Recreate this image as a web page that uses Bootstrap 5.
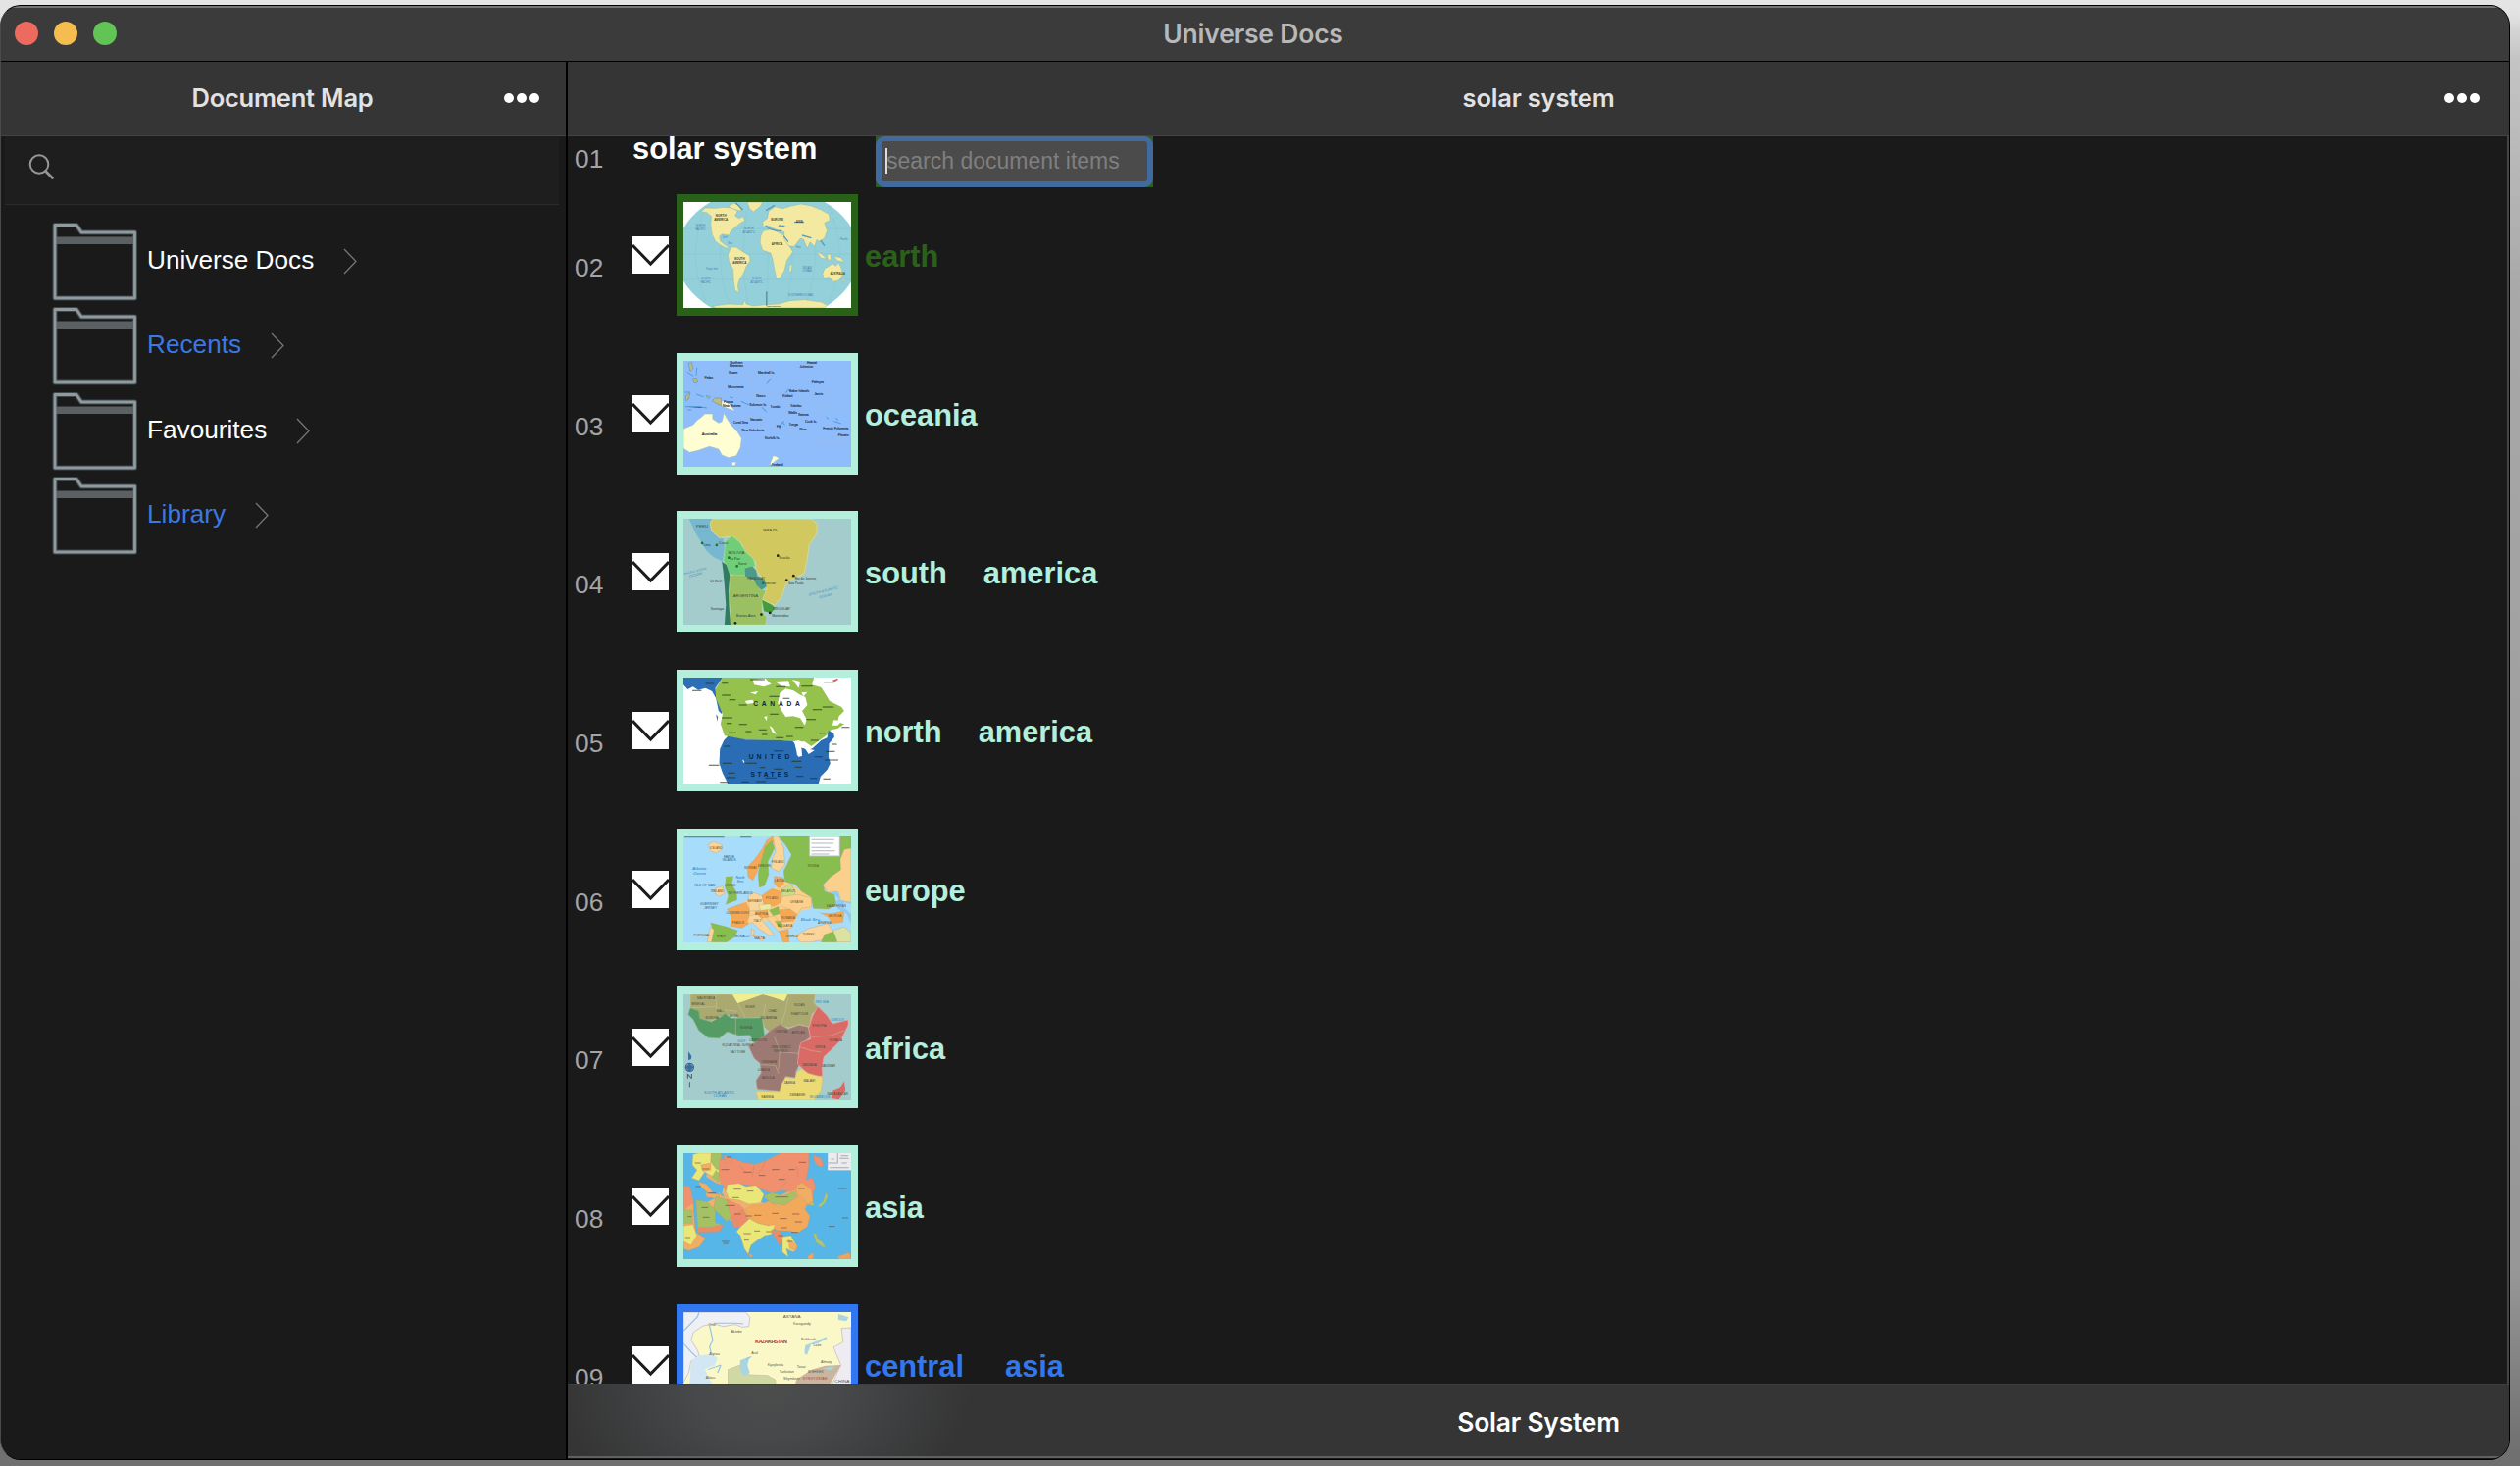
<!DOCTYPE html>
<html lang="en" data-bs-theme="dark">
<head>
<meta charset="utf-8">
<meta name="viewport" content="width=device-width, initial-scale=1">
<title>Universe Docs</title>
<link href="https://cdn.jsdelivr.net/npm/bootstrap@5.3.0/dist/css/bootstrap.min.css" rel="stylesheet">
<style>
html,body{height:100%}
body{margin:0;overflow:hidden;font-family:"Liberation Sans",Arial,sans-serif;background:linear-gradient(180deg,#e6e6e6 0,#c4c4c4 60px,#a8a8a8 300px,#969696 1300px,#707070 1480px)}
.desk{height:1495px;padding:5px 10px 6px 0;background:linear-gradient(180deg,#e4e4e4 0,#e4e4e4 5px,transparent 30px)}
.app-window{width:2560px;height:1484px;background:#1a1a1a;border:1px solid #000;border-left-color:#4a4a4a;border-radius:21px;overflow:hidden}
.titlebar{height:57px;background:#3b3b3b;border-top:2px solid #757575;border-bottom:1px solid #000;padding-bottom:3px}
.ui-font{font-family:Inter,Roboto,sans-serif;font-weight:600;letter-spacing:-.2px;line-height:30px;color:#e2e2e2}
.lights{width:200px;padding-left:14px;gap:16px}
.light{width:24px;height:24px;border-radius:50%}
.light-close{background:#ed6a5f}
.light-min{background:#f5bd4f}
.light-max{background:#61c455}
.win-title{color:#b8b8b8;font-size:26.5px}
.panel-head{height:76px;background:#353535;border-bottom:1px solid #444;padding-bottom:1px}
.panel-title{font-size:25.5px}
.dots{width:38px;height:12px}
.sidebar{width:576px;background:#1a1a1a}
.pane-line{width:2px;background:#000}
.find{height:70px;margin:0 7px 0 4px;background:#1e1e1e;border-bottom:1px solid #2b2b2b;padding:17px 0 0 24px}
.tree{padding:17px 0 0 52px}
.node{height:86.3px;font-size:26.2px;line-height:30px}
.node-label{padding:24px 0 0 9px}
.node-arrow{margin:27px 0 0 24px}
.blue{color:#3b78e4}
.main-pane{box-shadow:inset -2px 0 0 #444}
.items{height:1272px}
.doc-row{height:161.7px;padding-left:7px}
.doc-row.first{height:59px}
.num{width:59px;font-size:26.3px;line-height:26px;color:#a4a4a4;padding-top:62px}
.first .num{padding-top:10px}
.envelope{width:37px;height:38px;margin-top:43px;margin-right:8px;background:#fff}
.frame{width:185px;height:124px;border:8px solid currentColor;border-left-width:7px;border-right-width:7px}
.frame svg{width:171px;height:108px;display:block}
.name{padding:48px 0 0 7px;font-size:30.8px;line-height:31px;font-weight:700;white-space:nowrap}
.word-gap{margin-left:37px}
.heading{width:248px;margin-top:-3px;font-size:30.8px;line-height:31px;font-weight:700;color:#fff}
.mint{color:#b3efdc}
.green{color:#2a6119}
.azure{color:#3178f0}
.searchwrap{width:283px;height:52px;background:#2a6119}
.searchbox{height:52px;border:6px solid #416a9f;border-top-width:5px;border-radius:9px;background:#4b4b4b;color:#7f7f7f;font-size:23px;line-height:27px;padding:7px 0 0 4px}
.caret{width:2px;height:26px;background:#ddd;margin-right:-1px}
.footbar{height:76px;padding-top:3px;color:#fff;font-size:26.4px;background:radial-gradient(ellipse 210px 150px at 202px 0,#4c4d4d 0,#47494a 35%,#3d3e3f 70%,#353535 100%) #353535;border-top:1px solid #3f3f3f;border-bottom:2px solid #606260}
svg text{font-family:"Liberation Sans",Arial,sans-serif}
</style>
<script src="https://cdn.jsdelivr.net/npm/bootstrap@5.3.0/dist/js/bootstrap.bundle.min.js"></script>
</head>
<body>
<svg width="0" height="0" class="position-absolute">
<defs>
<g id="folder"><path d="M3 78V3.500H25L30 11H84.500V78Z" fill="none" stroke="#59666a" stroke-width="5" stroke-linejoin="round" opacity=".6"/><rect x="4" y="15.500" width="80" height="7.500" fill="#5b6062"/><path d="M3 78V3.500H25L30 11H84.500V78Z" fill="none" stroke="#8e9a9d" stroke-width="2.800" stroke-linejoin="round"/></g>
<path id="chev" d="M1 1L13 13.500L1 26" fill="none" stroke="#757575" stroke-width="1.300"/>
<g id="mail"><path d="M0 9L18.500 28L37 9" fill="none" stroke="#1c1c1c" stroke-width="3"/></g>
</defs>
</svg>
<div class="desk">
<div class="app-window d-flex flex-column">
  <header class="titlebar d-flex align-items-center flex-shrink-0">
    <div class="lights d-flex"><span class="light light-close"></span><span class="light light-min"></span><span class="light light-max"></span></div>
    <div class="win-title flex-grow-1 text-center ui-font">Universe Docs</div>
    <div style="width:204px"></div>
  </header>
  <div class="d-flex flex-grow-1">
    <aside class="sidebar d-flex flex-column flex-shrink-0">
      <div class="panel-head d-flex align-items-center">
        <div style="width:62px"></div>
        <div class="panel-title ui-font flex-grow-1 text-center">Document Map</div>
        <svg class="dots" style="margin-right:26px" viewBox="0 0 38 12" fill="#fff"><circle cx="6" cy="6" r="5"/><circle cx="19" cy="6" r="5"/><circle cx="32" cy="6" r="5"/></svg>
      </div>
      <div class="find"><svg width="27" height="28" viewBox="0 0 27 28" fill="none" stroke="#969696" stroke-width="2"><circle cx="11" cy="11.500" r="9.300"/><path d="M17.500 18.500L24.500 25.500" stroke-width="2.700" stroke-linecap="round"/></svg></div>
      <nav class="tree">
        <div class="node d-flex"><svg width="88" height="82"><use href="#folder"/></svg><span class="node-label text-white">Universe Docs</span><svg class="node-arrow" width="24" height="28"><use href="#chev" x="6"/></svg></div>
        <div class="node d-flex"><svg width="88" height="82"><use href="#folder"/></svg><span class="node-label blue">Recents</span><svg class="node-arrow" width="24" height="28"><use href="#chev" x="6"/></svg></div>
        <div class="node d-flex"><svg width="88" height="82"><use href="#folder"/></svg><span class="node-label text-white">Favourites</span><svg class="node-arrow" width="24" height="28"><use href="#chev" x="6"/></svg></div>
        <div class="node d-flex"><svg width="88" height="82"><use href="#folder"/></svg><span class="node-label blue">Library</span><svg class="node-arrow" width="24" height="28"><use href="#chev" x="6"/></svg></div>
      </nav>
    </aside>
    <div class="pane-line"></div>
    <main class="main-pane flex-grow-1 d-flex flex-column">
      <div class="panel-head d-flex align-items-center flex-shrink-0">
        <div style="width:67px"></div>
        <div class="panel-title ui-font flex-grow-1 text-center">solar system</div>
        <svg class="dots" style="margin-right:29px" viewBox="0 0 38 12" fill="#fff"><circle cx="6" cy="6" r="5"/><circle cx="19" cy="6" r="5"/><circle cx="32" cy="6" r="5"/></svg>
      </div>
      <section class="items overflow-hidden flex-shrink-0">
        <div class="doc-row first d-flex align-items-start"><div class="num">01</div><div class="heading">solar system</div><div class="searchwrap"><div class="searchbox d-flex"><span class="caret"></span><span>search document items</span></div></div></div>

        <div class="doc-row d-flex align-items-start"><div class="num">02</div><svg class="envelope"><use href="#mail"/></svg>
          <div class="frame green"><svg viewBox="51 48 510 324" preserveAspectRatio="none">
            <rect x="51" y="48" width="510" height="324" fill="#fff"/><ellipse cx="307" cy="209" rx="278" ry="206" fill="#94d0da"/>
            <g stroke="#7dbfcc" stroke-width="1" fill="none"><path d="M51 130H561M51 207H561M51 285H561M307 48V372M250 48Q215 210 250 372M364 48Q400 210 364 372M195 48Q130 210 195 372M419 48Q485 210 419 372M120 60Q55 210 120 355M492 60Q560 210 492 355"/></g>
            <g fill="#f4e9a0" stroke="#8fb9a4" stroke-width="1.500">
              <path d="M104 78L118 66 150 67 172 64 200 66 216 76 208 90 220 98 232 92 238 104 222 114 205 128 195 138 190 150 178 148 168 146 160 155 164 168 176 178 188 186 182 190 164 180 148 168 138 146 134 118 136 92 122 80Z"/>
              <path d="M188 60L204 52 222 58 226 76 212 72 196 66ZM245 48H292L284 62 264 78 252 68Z"/>
              <path d="M196 186L212 186 232 200 252 212 254 228 242 246 234 266 222 284 216 304 220 326 208 318 204 290 202 254 190 232 186 210Z"/>
              <path d="M294 136L320 131 350 146 368 158 374 184 384 200 366 226 358 258 346 280 334 282 328 256 322 222 316 204 292 196 284 172 286 152Z"/>
              <path d="M294 126L292 108 306 98 310 76 330 62 352 68 380 60 408 54 440 60 470 72 494 86 496 104 480 112 488 136 480 158 466 168 456 164 450 184 436 170 428 190 416 162 406 160 388 184 370 182 356 158 358 140 340 136 324 128 308 120Z"/>
              <path d="M474 268L480 252 494 244 504 236 514 244 524 234 532 252 536 270 524 288 508 292 494 278 478 280Z"/>
              <path d="M374 244L382 236 380 258 372 264ZM456 200L472 208 486 222 470 220ZM488 210L498 206 500 226 490 224ZM508 214L530 218 540 232 520 228ZM536 286L544 280 536 296Z"/>
              <path d="M140 366L190 360 232 362 238 348 242 360 262 366 300 362 340 360 374 350 420 347 470 354 488 364 480 372H150Z"/>
            </g>
            <path d="M300 120Q320 138 350 136M340 120L360 122M356 152L370 170M412 150L440 158M388 110H418M468 165L480 182M232 72L210 50M302 74L328 58" stroke="#5b9bb8" stroke-width="4" fill="none"/>
            <path d="M304 322V366" stroke="#345" stroke-width="2"/>
            <g font-size="9" font-weight="700" fill="#45452e" text-anchor="middle"><text x="165" y="94">NORTH</text><text x="165" y="105">AMERICA</text><text x="222" y="226">SOUTH</text><text x="222" y="237">AMERICA</text><text x="336" y="180">AFRICA</text><text x="336" y="104">EUROPE</text><text x="404" y="110">ASIA</text><text x="520" y="270" font-size="8">AUSTRALIA</text><text x="326" y="369" font-size="7">ANTARCTICA</text></g>
            <g font-size="8" fill="#3f7fae" text-anchor="middle"><text x="103" y="124">NORTH</text><text x="103" y="134">PACIFIC</text><text x="250" y="132">NORTH</text><text x="250" y="143">ATLANTIC</text><text x="119" y="286">SOUTH</text><text x="119" y="297">PACIFIC</text><text x="274" y="286">SOUTH</text><text x="274" y="297">ATLANTIC</text><text x="427" y="252">INDIAN</text><text x="427" y="262">OCEAN</text><text x="408" y="336">SOUTHERN OCEAN</text><text x="137" y="256">Tropic line</text><text x="540" y="165">Pacific</text><text x="400" y="190">Sea</text><text x="177" y="158">Gulf</text><text x="193" y="178">Sea</text></g>
          </svg></div><div class="name green">earth</div></div>

        <div class="doc-row d-flex align-items-start"><div class="num">03</div><svg class="envelope"><use href="#mail"/></svg>
          <div class="frame mint"><svg viewBox="51 54 510 324" preserveAspectRatio="none">
            <rect x="51" y="54" width="510" height="324" fill="#8fbdfb"/>
            <path d="M170 54V76H345V136H252V96H145V156H270V180M115 100V138H145M442 136H482L512 178V208H460V190L560 190M375 184H465V302H561M375 184V250L360 270H440M220 230H295V270M270 152H340" fill="none" stroke="#a2b9dc" stroke-width="1.500"/>
            <path d="M51 262L80 250 92 236 106 226 116 216 140 216 140 232 158 244 168 240 174 214 184 232 196 250 216 272 228 292 224 320 212 344 188 350 168 342 158 324 130 316 96 328 70 334 51 322ZM198 364L212 363 208 374 200 374ZM324 344L332 346 342 352 328 362 318 372 314 370Z" fill="#fffdd2" stroke="#96b9be" stroke-width="1.500"/>
            <path d="M146 168L166 168 168 192 150 184 138 176ZM66 62L76 58 80 78 72 86ZM78 108L92 106 94 120 84 122ZM58 160L72 152 66 172 58 176ZM120 160L134 164 126 170Z" fill="#c4b77f" stroke="#579cba" stroke-width="2"/><path d="M168 176L188 184 206 206 190 200 168 192Z" fill="#fff7c9"/>
            <path d="M62 88L82 100M92 74L90 98M54 150H72M90 156L112 164M56 194H100L122 198M64 204H76M192 164L202 168M226 178L250 188M290 196L304 210M340 255L358 238M350 240L360 250M485 225L492 232M508 238L530 246M514 228L522 236M362 152L372 140M318 108L304 124" stroke="#559de0" stroke-width="3"/>
            <g font-size="10" fill="#21314d" stroke="#21314d" stroke-width=".4" text-anchor="middle"><text x="212" y="63">Northern</text><text x="212" y="72">Marianas</text><text x="202" y="92">Guam</text><text x="128" y="109">Palau</text><text x="303" y="94">Marshall Is.</text><text x="210" y="139">Micronesia</text><text x="286" y="165">Nauru</text><text x="368" y="165">Kiribati</text><text x="403" y="151">Baker Islands</text><text x="459" y="122">Palmyra</text><text x="462" y="158">Jarvis</text><text x="188" y="184">Papua</text><text x="198" y="195">New Guinea</text><text x="278" y="191">Solomon Is.</text><text x="330" y="198">Tuvalu</text><text x="393" y="196">Tokelau</text><text x="384" y="216">Wallis</text><text x="416" y="222">Samoa</text><text x="272" y="236">Vanuatu</text><text x="225" y="247">Coral Sea</text><text x="262" y="269">New Caledonia</text><text x="341" y="258">Fiji</text><text x="386" y="252">Tonga</text><text x="415" y="268">Niue</text><text x="439" y="243">Cook Is.</text><text x="514" y="264">French Polynesia</text><text x="321" y="293">Norfolk Is.</text><text x="538" y="285">Pitcairn</text><text x="425" y="75">Johnston</text><text x="442" y="63">Hawaii</text><text x="130" y="282" font-size="12">Australia</text><text x="336" y="375">Zealand</text></g>
          </svg></div><div class="name mint">oceania</div></div>

        <div class="doc-row d-flex align-items-start"><div class="num">04</div><svg class="envelope"><use href="#mail"/></svg>
          <div class="frame mint"><svg viewBox="51 60 510 321" preserveAspectRatio="none">
            <rect x="51" y="60" width="510" height="321" fill="#a5cccd"/>
            <path d="M68 60H140L134 90 146 108 172 120 178 150 170 190 142 176 120 156 104 130 88 104Z" fill="#77b8d0"/>
            <path d="M140 60H440L458 76 456 106 434 138 426 190 418 226 380 244 362 260 348 300 328 322 290 304 304 274 290 240 272 216 270 190 244 166 224 130 196 114 160 118 136 96 132 72Z" fill="#d1c95f" stroke="#dfe0a0" stroke-width="2"/>
            <path d="M178 128L198 112 222 130 242 162 264 182 270 204 240 210 238 232 206 234 190 226 182 200 172 188 176 160Z" fill="#6fce77" stroke="#b2dfa2" stroke-width="2"/>
            <path d="M190 234L206 230 236 232 270 250 284 274 302 278 290 306 290 340 304 360 300 381H190L194 340 188 290 192 260Z" fill="#9bc062" stroke="#bcd79c" stroke-width="1.500"/>
            <path d="M168 190L182 200 192 230 188 280 190 330 194 381H176L180 320 176 262 172 220Z" fill="#2f7c60"/>
            <path d="M238 210L260 204 272 216 276 234 298 244 304 266 288 276 274 262 266 246 238 234Z" fill="#4c9b88"/><path d="M290 306L318 320 330 330 318 346 296 340Z" fill="#459c38"/>
            <g fill="#173"><circle cx="108" cy="134" r="4"/><circle cx="152" cy="140" r="4"/><circle cx="189" cy="178" r="4"/><circle cx="214" cy="204" r="4"/></g><g fill="#222"><circle cx="338" cy="172" r="4"/><circle cx="386" cy="233" r="4"/><circle cx="365" cy="246" r="4"/><circle cx="288" cy="350" r="4"/><circle cx="314" cy="345" r="4"/><circle cx="209" cy="376" r="4"/></g>
            <g font-size="13" fill="#3d4a31" text-anchor="middle"><text x="108" y="87">PERU</text><text x="316" y="98">BRAZIL</text><text x="212" y="166">BOLIVIA</text><text x="240" y="299">ARGENTINA</text><text x="150" y="253">CHILE</text><text x="350" y="335" font-size="11">URUGUAY</text><text x="272" y="243" font-size="10">PARAGUAY</text></g>
            <g font-size="10" fill="#263b38"><text x="112" y="144">Lima</text><text x="158" y="137">Cusco</text><text x="192" y="186">La Paz</text><text x="218" y="200">Sucre</text><text x="342" y="182">Brasilia</text><text x="390" y="243">Rio de Janeiro</text><text x="370" y="258">Sao Paulo</text><text x="134" y="336">Santiago</text><text x="212" y="358">Buenos Aires</text><text x="320" y="356">Montevideo</text><text x="290" y="260">Asuncion</text></g>
            <g font-size="11" font-style="italic" fill="#398dba"><text x="54" y="230" transform="rotate(-14 54 230)" font-size="9">PACIFIC OCEAN</text><text x="70" y="238" transform="rotate(-14 70 238)">OCEAN</text><text x="432" y="294" transform="rotate(-14 432 294)">SOUTH ATLANTIC</text><text x="464" y="302" transform="rotate(-14 464 302)">OCEAN</text></g>
          </svg></div><div class="name mint">south<span class="word-gap">america</span></div></div>

        <div class="doc-row d-flex align-items-start"><div class="num">05</div><svg class="envelope"><use href="#mail"/></svg>
          <div class="frame mint"><svg viewBox="51 48 510 324" preserveAspectRatio="none">
            <rect x="51" y="48" width="510" height="324" fill="#fff"/>
            <path d="M51 48H170L148 80 152 112 166 134 168 160 158 150 150 112 138 90 118 80 96 86 80 76 64 84 51 70ZM150 160L156 168 154 182Z" fill="#2d6fb6"/>
            <path d="M170 48H448L442 70 470 78 496 120 532 138 540 150 524 166 520 184 540 190 520 204 500 208 490 222 470 236 440 258 420 244 376 244 350 240 220 238 188 228 176 226 164 190 170 160 150 112 148 84Z" fill="#94c24c"/>
            <path d="M186 227L240 238 350 240 388 244 392 262 400 290 412 288 410 262 430 270 444 264 470 240 488 232 492 210 508 218 510 230 494 250 492 290 498 310 488 330 468 350 462 372H186L170 340 160 310 162 266 174 240Z" fill="#2b6db5"/>
            <path d="M344 96L362 82 386 88 404 100 422 108 428 132 412 150 426 176 420 194 406 172 384 166 362 168 350 150 338 126ZM262 54L300 50 318 68 296 76 266 70ZM330 60L370 58 376 76 350 74ZM382 54L406 60 402 80ZM254 94L278 90 270 100ZM238 120L260 116 268 126 244 128ZM312 194L322 202 334 222 322 216ZM296 168L306 166 304 180ZM384 244L402 240 420 250 432 262 416 264 396 256ZM508 178L534 180 520 194 504 194ZM420 264L450 270 432 282ZM396 258L404 260 404 290 396 284ZM230 298L237 304 234 310ZM410 94L428 92 416 106Z" fill="#fff"/>
            <path d="M504 56L520 50 522 54 510 62Z" fill="#e66070"/>
            <path d="M168 65H186M118 66H144M78 88H106M168 102H194M190 116H210M220 132H244M168 171H200M182 188H198M220 191H244M188 217H212M240 213H258M280 208H304M290 222H306M332 232H356M364 228H384M390 200H416M424 176H454M444 146H472M474 138H508M478 62H510M332 76H362M410 74H444M312 106H342M254 54H298M438 240H462M314 160H340M174 258H192M170 310H200M186 340H208M182 354H210M228 367H250M240 310H274M284 323H300M326 328H354M390 322H412M394 350H416M436 356H458M326 272H356M450 290H474M480 300H522M484 274H512M476 358H498M128 316H160M300 355H334M380 304H410M464 218H482M532 200H556M162 368H188M502 252H518M354 112H374M272 366H302" stroke="#24331f" stroke-opacity=".8" stroke-width="3"/>
            <g font-weight="700" fill="#12243a" text-anchor="middle"><text x="340" y="136" font-size="20" letter-spacing="11">CANADA</text><text x="317" y="298" font-size="20" letter-spacing="10">UNITED</text><text x="317" y="350" font-size="20" letter-spacing="8">STATES</text></g>
          </svg></div><div class="name mint">north<span class="word-gap">america</span></div></div>

        <div class="doc-row d-flex align-items-start"><div class="num">06</div><svg class="envelope"><use href="#mail"/></svg>
          <div class="frame mint"><svg viewBox="51 54 510 324" preserveAspectRatio="none">
            <rect x="51" y="54" width="510" height="324" fill="#a7dcfb"/>
            <path d="M200 280L250 244 290 234 330 210 344 190 372 196 440 240 440 272 400 290 388 320 374 340H350L310 310 260 320 226 328Z" fill="#fbd08c"/>
            <g stroke="#b79b67" stroke-width="1">
            <path d="M126 78L144 70 168 80 168 94 150 104 132 98Z" fill="#fbd49a"/>
            <path d="M340 54H561V90L540 96 528 130 530 156 496 180 476 200 480 222 510 232 516 262 492 276 446 274 440 240 410 222 392 200 360 192 356 160 366 140 380 110 362 80Z" fill="#88bd50"/>
            <path d="M561 90L540 94 528 124 530 156 496 180 476 204 490 226 516 222 530 250 561 258Z" fill="#fbd08c"/>
            <path d="M322 54H340L356 90 360 140 340 162 318 150 322 120 332 100Z" fill="#fbd49a"/>
            <path d="M246 146L268 124 292 90 304 66 322 54 326 70 300 90 286 130 276 160 262 188 248 178Z" fill="#f6a954"/>
            <path d="M284 140L300 84 320 66 328 90 308 130 310 170 298 204 282 210 278 170Z" fill="#88bd50"/>
            <path d="M180 178L202 176 198 200 212 224 214 248 180 262 188 236 178 210Z" fill="#88bd50"/><path d="M148 212L170 206 176 228 160 238 148 230Z" fill="#fbd49a"/>
            <path d="M134 318L180 330 216 342 206 362 182 377H136L142 346Z" fill="#88bd50"/><path d="M132 330L144 340 136 377H124Z" fill="#fbd49a"/>
            <path d="M184 276L216 264 242 256 252 280 248 322 228 334 194 328 198 300Z" fill="#f6a954"/>
            <path d="M248 236L266 226 290 236 296 260 282 280 252 282Z" fill="#fbd49a"/><path d="M290 234L320 214 346 222 350 254 326 268 296 260Z" fill="#f6a954"/>
            <path d="M328 176L354 180 356 200 340 212 326 196Z" fill="#f6a954"/><path d="M350 216L376 196 392 222 386 240 352 238Z" fill="#c8dc8b"/>
            <path d="M350 238L400 232 440 242 440 270 410 274 398 292 370 276 346 266Z" fill="#fbd08c"/>
            <path d="M280 264L316 260 318 276 286 282Z" fill="#e8eaa1"/><path d="M312 280L340 268 344 290 324 296Z" fill="#88bd50"/><path d="M344 278L376 276 398 294 386 312 348 314Z" fill="#f6a954"/>
            <path d="M252 296L284 290 290 310 314 338 328 358 310 356 280 336 262 318 244 318ZM262 356L300 364 290 374ZM258 336L266 340 264 360 258 360Z" fill="#fbd49a"/>
            <path d="M268 284L306 278 310 300 288 304Z" fill="#f6a954"/><path d="M304 302L328 296 344 318 350 350 336 340 318 320Z" fill="#fbd08c"/><path d="M330 312L348 314 352 334 340 330Z" fill="#88bd50"/><path d="M350 316L386 314 382 332 360 336Z" fill="#fbd49a"/><path d="M342 344L370 338 372 377H354Z" fill="#f6a954"/>
            <path d="M392 358L430 336 490 320 506 344 490 366 440 377 406 377Z" fill="#fbd49a"/><path d="M480 354L510 344 518 377H470Z" fill="#88bd50"/><path d="M506 342L540 330 561 350V377H520Z" fill="#dde2a0"/><path d="M460 288L500 290 540 282 536 316 500 320 486 306Z" fill="#f6a954"/>
            </g>
            <path d="M500 224L522 222 528 240 514 256 520 276 548 290 561 320V292L536 268 540 256 561 260V254L530 250Z" fill="#8cccf3"/><path d="M398 302L410 280 440 276 490 300 504 320 450 322 406 326Z" fill="#a7dcfb"/>
            <rect x="434" y="54" width="92" height="60" fill="#fff" stroke="#b8bec4" stroke-width="3"/><path d="M440 64H510M440 75H508M440 88H498M440 98H512M440 108H494" stroke="#b4b8c0" stroke-width="3"/><path d="M54 56H175M224 56H258" stroke="#4c7393" stroke-width="3"/>
            <g font-size="9" fill="#664c2b" text-anchor="middle"><text x="150" y="94">ICELAND</text><text x="338" y="134">FINLAND</text><text x="256" y="154">NORWAY</text><text x="297" y="146">SWEDEN</text><text x="446" y="146">RUSSIA</text><text x="343" y="193">LATVIA</text><text x="370" y="226">BELARUS</text><text x="320" y="246">POLAND</text><text x="396" y="257">UKRAINE</text><text x="268" y="254">GERMANY</text><text x="218" y="320">FRANCE</text><text x="165" y="364">SPAIN</text><text x="107" y="360">PORTUGAL</text><text x="432" y="356">TURKEY</text><text x="370" y="306">ROMANIA</text><text x="276" y="316">ITALY</text><text x="194" y="206">UNITED</text><text x="154" y="226">IRELAND</text><text x="516" y="271">KAZAKHSTAN</text><text x="480" y="322">ARMENIA</text><text x="512" y="299">GEORGIA</text><text x="360" y="330">BULGARIA</text><text x="382" y="363">GREECE</text><text x="288" y="294">AUSTRIA</text></g>
            <g font-size="10" fill="#315c7d" text-anchor="middle"><text x="190" y="119">FAROE</text><text x="190" y="130">ISLANDS</text><text x="116" y="206">ISLE OF MAN</text><text x="130" y="264">GUERNSEY</text><text x="134" y="276">JERSEY</text><text x="224" y="230">NETHERLANDS</text><text x="216" y="290">LUXEMBOURG</text><text x="230" y="362">MONACO</text><text x="282" y="370">MALTA</text></g><g font-size="13" font-style="italic" fill="#2774c4" text-anchor="middle"><text x="100" y="157">Atlantic</text><text x="100" y="170">Ocean</text><text x="437" y="312">Black Sea</text><text x="224" y="184" font-size="11">North</text><text x="224" y="194" font-size="11">Sea</text></g>
          </svg></div><div class="name mint">europe</div></div>

        <div class="doc-row d-flex align-items-start"><div class="num">07</div><svg class="envelope"><use href="#mail"/></svg>
          <div class="frame mint"><svg viewBox="51 51 510 321" preserveAspectRatio="none">
            <rect x="51" y="51" width="510" height="321" fill="#a5cccd"/>
            <path d="M72 51H200L216 76 292 51H452L448 76 462 92 442 112 434 150 404 142 372 152 340 144 316 168 296 150 290 120 218 124 204 112 170 116 136 132 96 124 72 100Z" fill="#aaa970" stroke="#c9ca9e" stroke-width="1.500"/><path d="M200 51H292L216 78ZM292 51H368L358 72 330 62Z" fill="#f1ee90"/>
            <path d="M72 92L98 102 100 124 136 134 178 110 196 124 290 122 294 152 298 184 282 206 262 194 254 174 220 176 184 164 160 184 126 182 98 160 82 128 66 112Z" fill="#559b66" stroke="#73ae78" stroke-width="2"/>
            <path d="M250 210L284 186 322 156 344 142 370 156 402 144 430 150 438 180 408 202 400 230 404 262 392 288 396 304 362 300 344 346 276 340 272 312 288 288 284 260 266 244Z" fill="#9c7972" stroke="#b89791" stroke-width="2"/>
            <path d="M460 88L488 116 504 140 552 128 552 144 530 190 500 220 478 240 472 272 474 298 440 300 422 284 398 262 404 212 408 198 438 186 432 154 444 116Z" fill="#da6a65" stroke="#eca29c" stroke-width="2"/><path d="M540 314L544 344 524 370 500 366 506 344 526 336Z" fill="#da6a65"/>
            <path d="M272 346L344 348 350 322 362 302 390 306 396 286 410 276 430 290 474 302 470 344 448 372H278Z" fill="#ecdb75" stroke="#c9c27c" stroke-width="2"/>
            <path d="M148 51L152 96 214 102M300 80L294 120M370 60L362 100 350 140M216 78L240 122M136 132L170 116M210 124V174M328 180L344 226 340 280M344 226L400 230M440 180L500 176L540 160M404 210L440 222 470 226M286 264L330 266 340 290M360 300L392 306M72 92L148 88" stroke="#d3cda5" stroke-opacity=".65" stroke-width="2" fill="none"/>
            <path d="M66 224L76 238 74 248 66 250ZM70 260L82 272 70 286 58 272Z" fill="#3a6e9c"/><circle cx="70" cy="272" r="12" fill="none" stroke="#3c6693" stroke-width="4"/><path d="M64 292V306M76 292V306M64 292L76 306M70 316V334" stroke="#425f7d" stroke-width="3"/>
            <g font-size="9" fill="#4a4d3b" text-anchor="middle"><text x="120" y="65">MAURITANIA</text><text x="96" y="83">SENEGAL</text><text x="162" y="106">MALI</text><text x="254" y="94">NIGER</text><text x="322" y="104">CHAD</text><text x="404" y="86">SUDAN</text><text x="404" y="112">KHARTOUM</text><text x="138" y="125">BURKINA</text><text x="204" y="118">BENIN</text><text x="242" y="156">NIGERIA</text><text x="310" y="124">NDJAMENA</text><text x="278" y="195">CAMEROON</text><text x="350" y="168">CENTRAL</text><text x="400" y="170">AFRICAN</text><text x="348" y="214">DEMOCRATIC</text><text x="348" y="226">REPUBLIC</text><text x="312" y="258">KINSHASA</text><text x="308" y="308">ANGOLA</text><text x="295" y="282">LUANDA</text><text x="464" y="148">ETHIOPIA</text><text x="514" y="194">SOMALIA</text><text x="466" y="214">KENYA</text><text x="434" y="268">TANZANIA</text><text x="374" y="322">ZAMBIA</text><text x="434" y="316">MALAWI</text><text x="398" y="360">ZIMBABWE</text><text x="306" y="367">NAMIBIA</text><text x="520" y="356">MADAGASCAR</text><text x="216" y="210">EQUATORIAL GUINEA</text><text x="216" y="230">SAO TOME</text><text x="492" y="270">ZANZIBAR</text></g><g font-size="11" fill="#2984be" text-anchor="middle"><text x="160" y="354">SOUTH ATLANTIC</text><text x="162" y="364">OCEAN</text><text x="472" y="77" font-size="9">RED SEA</text><text x="520" y="130" font-size="9">DJIBOUTI</text><text x="228" y="196" font-size="9">GULF</text><text x="466" y="367" font-size="9">MOZAMBIQUE</text></g>
          </svg></div><div class="name mint">africa</div></div>

        <div class="doc-row d-flex align-items-start"><div class="num">08</div><svg class="envelope"><use href="#mail"/></svg>
          <div class="frame mint"><svg viewBox="51 48 510 324" preserveAspectRatio="none">
            <rect x="51" y="48" width="510" height="324" fill="#56b6e8"/>
            <path d="M136 52L164 60 170 140 184 176 200 190 300 200 400 150 444 170 420 220 300 276 230 280 190 250 150 224 122 198 160 180 152 140 120 120Z" fill="#f1b070"/>
            <g stroke="#c6945e" stroke-width="1">
            <path d="M80 52L96 48H136L134 74 162 90 158 132 136 116 116 106 98 132 76 124 92 100 78 84Z" fill="#e8e778"/><path d="M136 48H166L164 100 150 96 134 74ZM150 100L160 112 158 138 138 122Z" fill="#a4c166"/><path d="M104 84L134 78 134 100 110 104ZM96 136L120 142 140 166 128 172 104 150ZM118 170L160 174 158 188 122 182Z" fill="#f1ad63"/>
            <path d="M162 64L196 76 204 64 232 76 270 82 300 72 326 58 348 48H432V90L424 130 444 124 452 150 440 190 422 170 408 150 380 166 350 162 320 170 292 160 270 150 240 144 200 142 180 160 164 140 158 110Z" fill="#f0906e"/><path d="M446 54L470 64 476 86 462 88 450 74ZM174 54L200 64 202 78 176 78Z" fill="#f0906e"/>
            <path d="M184 144L220 140 242 150 272 146 296 174 286 200 250 204 222 192 190 188 180 166Z" fill="#e8e778"/>
            <path d="M294 180L320 168 354 178 392 164 398 180 360 206 324 204Z" fill="#a4c166"/>
            <path d="M396 146L412 138 440 160 446 196 430 206 408 180 394 174Z" fill="#f1ad63"/>
            <path d="M238 220L262 208 290 206 306 196 340 212 364 204 402 182 430 204 416 214 436 240 428 272 398 292 374 286 336 284 306 268 276 260 252 250Z" fill="#f3a95c"/>
            <path d="M150 180L192 192 200 246 182 256 156 230 142 216Z" fill="#a4c166"/><path d="M182 190L222 206 236 220 196 242 190 220Z" fill="#f0906e"/><path d="M194 242L234 220 250 254 228 272 206 276Z" fill="#ec8b6a"/>
            <path d="M224 274L252 248 276 262 310 270 330 266 318 296 298 300 274 316 256 330 248 358 236 340 224 300 212 288Z" fill="#e8e778"/>
            <path d="M318 282L340 286 362 310 374 326 352 318 342 330 330 306Z" fill="#ec8b6a"/><path d="M352 304L378 300 396 332 386 350 364 340 370 366 352 350Z" fill="#e8e778"/><path d="M370 312L398 330 392 348 374 340Z" fill="#f1ad63"/>
            <path d="M90 192L122 196 148 224 148 260 168 268 150 286 96 288 92 240Z" fill="#a4c166"/><path d="M94 276L134 274 174 266 160 288 94 290Z" fill="#ec8b6a"/>
            <path d="M51 148L70 150 80 190 84 250 88 290 118 308 100 334 68 346 51 340Z" fill="#f1ad63"/><path d="M51 148L70 150 80 200 51 222Z" fill="#f0906e"/><path d="M51 222H78V262H51Z" fill="#a4c166"/><path d="M51 270L80 266 92 300 74 330 51 318Z" fill="#e8e778"/>
            <path d="M484 168L490 180 482 200 466 214 460 208 476 196ZM446 292L456 296 458 310 474 320 484 338 472 334 454 320ZM432 208L442 196 450 208Z" fill="#a8c77b"/><path d="M428 364L446 352 446 372H430ZM520 364L556 352 561 372H524ZM246 354L262 360 256 368Z" fill="#efa35e"/>
            </g>
            <path d="M128 150L154 140 174 146 168 170 178 182 166 178 156 164 132 158Z" fill="#56b6e8"/><path d="M224 86L236 104M300 76L280 110M348 152L366 134M266 86L260 120M396 90L400 122" stroke="#d97f67" stroke-width="2"/>
            <path d="M490 48H561V100H490Z" fill="#ececee"/><path d="M490 78H520V48M500 66H510M526 64H554M532 78H548M496 92H554M530 56H552" stroke="#a5a9b0" stroke-width="3" fill="none"/>
            <path d="M166 98H190M234 106H258M280 116H300M320 98H342M372 98H390M204 158H226M244 164H264M330 182H370M200 184H220M178 208H208M106 214H126M110 244H130M64 242H76M206 234H226M240 240H260M266 238H288M320 232H340M344 248H366M382 234H404M390 258H412M234 294H256M236 314H250M266 286H284M302 288H320M348 276H366M400 156H420M88 150H104M126 170H150M56 306H72M380 290H400M168 318H190M172 324H188M522 156H548M534 246H552M492 272H512M86 78H104M108 96H130M340 128H360M402 76H424M182 60H198M338 300H354M366 318H384" stroke="#674a38" stroke-opacity=".75" stroke-width="2.500"/>
          </svg></div><div class="name mint">asia</div></div>

        <div class="doc-row d-flex align-items-start"><div class="num">09</div><svg class="envelope"><use href="#mail"/></svg>
          <div class="frame azure"><svg viewBox="311 114 417 324" preserveAspectRatio="none">
            <rect x="311" y="114" width="417" height="324" fill="#fbf8c8"/>
            <path d="M311 114H466L476 130 474 158 456 160 440 152 410 158 386 150 360 156 336 176 330 200 346 230 352 254 330 264 324 300 311 330Z" fill="#eef0f6" stroke="#c1b9c1" stroke-width="2"/>
            <path d="M728 162L704 164 708 206 684 222 702 274 690 310 680 336 672 438H728Z" fill="#eeecf1" stroke="#c6b8bd" stroke-width="2"/>
            <path d="M344 248L380 242 396 254 388 278 364 288 372 310 390 350 376 400H311L326 340 330 266Z" fill="#d2e6f4"/>
            <path d="M422 290L452 276 474 306 520 308 540 322 540 438H422Z" fill="#d0d8a4" stroke="#b6b890" stroke-width="1.500"/><path d="M592 320L630 290 664 278 704 276 690 304 676 334 660 380H580Z" fill="#c9b6a0"/>
            <path d="M452 262L476 250 470 276 476 300 462 310 452 292ZM614 216L640 204 666 190 668 196 644 210 628 214 618 246 612 240ZM656 286L690 280 676 292ZM696 120L722 130 716 142 696 138Z" fill="#a9d4e2"/>
            <path d="M376 156L384 200 376 220 380 240M386 148L440 148 460 150M311 172L346 128 350 114M311 210L330 236 344 252M466 260L480 250M404 276L396 300M372 290L404 276" fill="none" stroke="#95c4df" stroke-width="3"/>
            <text x="529" y="209" text-anchor="middle" font-size="14" font-weight="700" fill="#a2443c" textLength="80">KAZAKHSTAN</text>
            <g font-size="9" fill="#5a5748" text-anchor="middle"><text x="581" y="132" font-size="11">ASTANA</text><text x="606" y="154">Karagandy</text><text x="443" y="177">Aktobe</text><text x="382" y="157">Oral</text><text x="388" y="245">Atyrau</text><text x="488" y="244">Aral</text><text x="540" y="280">Kyzylorda</text><text x="622" y="200">Balkhash</text><text x="644" y="220">Lake</text><text x="568" y="299">Turkistan</text><text x="604" y="286">Taraz</text><text x="580" y="322">Shymkent</text><text x="666" y="270">Almaty</text><text x="640" y="301">BISHKEK</text><text x="378" y="319">Aktau</text><text x="638" y="322" fill="#a2443c">KYRGYZSTAN</text><text x="706" y="330" font-size="12">CHINA</text></g>
          </svg></div><div class="name azure">central<span style="margin-left:42px">asia</span></div></div>
      </section>
      <footer class="footbar d-flex align-items-center justify-content-center ui-font">Solar System</footer>
    </main>
  </div>
</div>
</div>
</body>
</html>
